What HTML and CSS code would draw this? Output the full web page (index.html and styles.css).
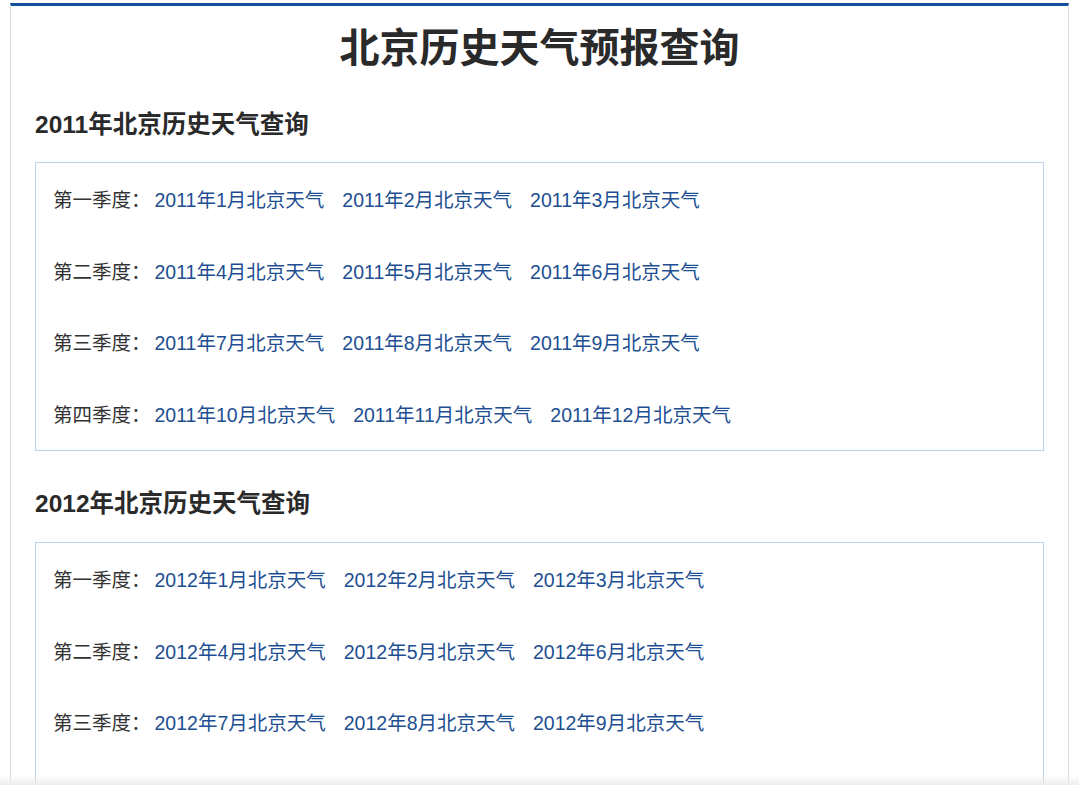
FILE: index.html
```html
<!DOCTYPE html>
<html lang="zh-CN">
<head>
<meta charset="utf-8">
<title>北京历史天气预报查询</title>
<link rel="stylesheet" href="styles.css">
</head>
<body>
<div class="page">
  <h1 class="title">北京历史天气预报查询</h1>

  <section class="year">
    <h2 class="year-title">2011年北京历史天气查询</h2>
    <div class="box">
      <div class="row"><span class="label">第一季度：</span><a class="link" href="#">2011年1月北京天气</a><a class="link" href="#">2011年2月北京天气</a><a class="link" href="#">2011年3月北京天气</a></div>
      <div class="row"><span class="label">第二季度：</span><a class="link" href="#">2011年4月北京天气</a><a class="link" href="#">2011年5月北京天气</a><a class="link" href="#">2011年6月北京天气</a></div>
      <div class="row"><span class="label">第三季度：</span><a class="link" href="#">2011年7月北京天气</a><a class="link" href="#">2011年8月北京天气</a><a class="link" href="#">2011年9月北京天气</a></div>
      <div class="row"><span class="label">第四季度：</span><a class="link" href="#">2011年10月北京天气</a><a class="link" href="#">2011年11月北京天气</a><a class="link" href="#">2011年12月北京天气</a></div>
    </div>
  </section>

  <section class="year year-next">
    <h2 class="year-title">2012年北京历史天气查询</h2>
    <div class="box">
      <div class="row"><span class="label">第一季度：</span><a class="link" href="#">2012年1月北京天气</a><a class="link" href="#">2012年2月北京天气</a><a class="link" href="#">2012年3月北京天气</a></div>
      <div class="row"><span class="label">第二季度：</span><a class="link" href="#">2012年4月北京天气</a><a class="link" href="#">2012年5月北京天气</a><a class="link" href="#">2012年6月北京天气</a></div>
      <div class="row"><span class="label">第三季度：</span><a class="link" href="#">2012年7月北京天气</a><a class="link" href="#">2012年8月北京天气</a><a class="link" href="#">2012年9月北京天气</a></div>
      <div class="row"><span class="label">第四季度：</span><a class="link" href="#">2012年10月北京天气</a><a class="link" href="#">2012年11月北京天气</a><a class="link" href="#">2012年12月北京天气</a></div>
    </div>
  </section>
</div>
<div class="fade"></div>
</body>
</html>
```

FILE: styles.css
```css
html, body {
  margin: 0;
  padding: 0;
  background: #ffffff;
}

body {
  font-family: "Liberation Sans", "Noto Sans CJK SC", sans-serif;
  color: #333333;
}

.page {
  margin: 3px 10px 0;
  border-top: 3px solid #0f4f9c;
  border-left: 1px solid #dcdcdc;
  border-right: 1px solid #dcdcdc;
  padding: 0 24px 40px;
  min-height: 900px;
}

.title {
  margin: 14px 0 0;
  font-size: 40px;
  line-height: 56px;
  font-weight: bold;
  text-align: center;
  color: #2a2a2a;
}

.year-title {
  margin: 34px 0 22px;
  font-size: 24.5px;
  line-height: 30px;
  font-weight: bold;
  color: #2a2a2a;
}

.year-next .year-title {
  margin-top: 38px;
  margin-bottom: 23px;
}

.box {
  border: 1px solid #bcd2e8;
  padding-bottom: 1px;
}

.row {
  display: flex;
  align-items: center;
  height: 71.5px;
  padding-left: 17px;
  font-size: 19.5px;
}

.label {
  color: #333333;
  margin-right: 4px;
}

.link {
  color: #1d4f92;
  text-decoration: none;
  margin-right: 18px;
}

.fade {
  position: fixed;
  left: 0;
  right: 0;
  bottom: 0;
  height: 10px;
  background: linear-gradient(to bottom, rgba(240, 240, 240, 0), #ededed);
}
```
